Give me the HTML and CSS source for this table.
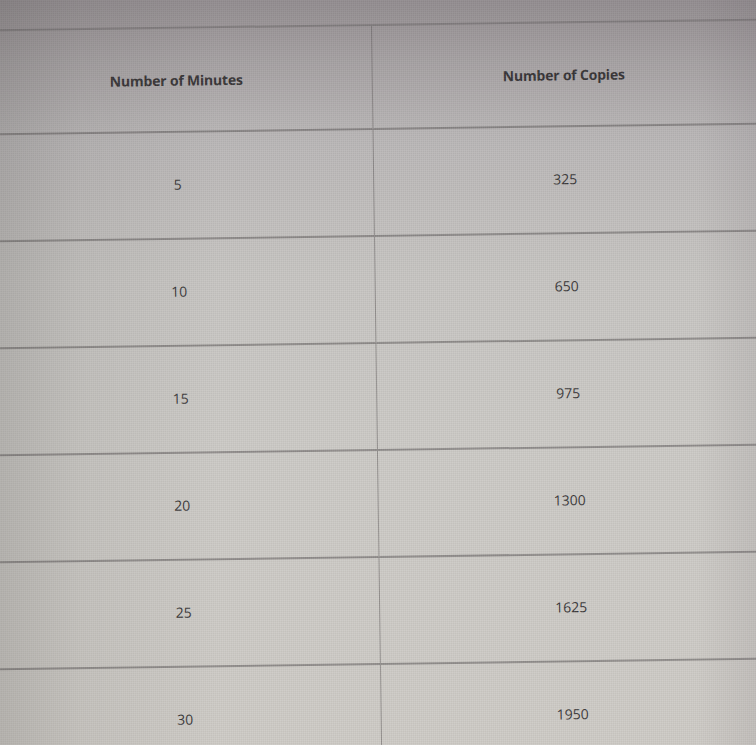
FILE: index.html
```html
<!DOCTYPE html>
<html lang="en">
<head>
<meta charset="utf-8">
<title>Table</title>
<link rel="stylesheet" href="styles.css">
</head>
<body>
<div class="screen">
  <div class="sheet">
    <div class="table">
      <div class="cell head">Number of Minutes</div>
      <div class="cell head">Number of Copies</div>
      <div class="cell">5</div>
      <div class="cell">325</div>
      <div class="cell">10</div>
      <div class="cell">650</div>
      <div class="cell">15</div>
      <div class="cell">975</div>
      <div class="cell">20</div>
      <div class="cell">1300</div>
      <div class="cell">25</div>
      <div class="cell">1625</div>
      <div class="cell">30</div>
      <div class="cell">1950</div>
    </div>
  </div>
  <div class="texture"></div>
  <div class="shade"></div>
</div>
</body>
</html>
```

FILE: styles.css
```css
html, body {
  margin: 0;
  padding: 0;
  width: 756px;
  height: 745px;
  overflow: hidden;
}

body {
  background: #c4c2bf;
  font-family: "Open Sans", "Liberation Sans", sans-serif;
}

.screen {
  position: relative;
  width: 756px;
  height: 745px;
  overflow: hidden;
  background:
    linear-gradient(180deg, #9b9698 0px, #aaa6a7 60px, #bab7b7 150px, #c6c4c1 280px, #cbc9c5 450px, #cdcac5 745px);
}

.sheet {
  padding-top: 24px;
  margin-left: -24px;
  width: 800px;
  transform: rotate(-0.8deg);
  transform-origin: 396px 24px;
}

.table {
  display: grid;
  grid-template-columns: 396px 404px;
  grid-template-rows: 104px;
  grid-auto-rows: 107px;
  border-top: 2px solid rgba(110, 106, 106, 0.55);
}

.cell {
  display: flex;
  align-items: center;
  justify-content: center;
  border-bottom: 2px solid rgba(100, 96, 96, 0.58);
  color: #383637;
  font-size: 14px;
  letter-spacing: 0px;
  padding-bottom: 2px;
  box-sizing: border-box;
}

.cell:nth-child(odd) {
  border-right: 1px solid rgba(100, 96, 96, 0.55);
  padding-left: 4px;
}

.cell:nth-child(even) {
  padding-right: 22px;
}

.head {
  font-weight: 700;
  color: #333132;
  font-size: 14px;
  letter-spacing: -0.2px;
  padding-bottom: 0;
}

.texture {
  position: absolute;
  inset: 0;
  pointer-events: none;
  background:
    repeating-linear-gradient(90deg, rgba(255,255,255,0.04) 0 1px, rgba(0,0,0,0.02) 1px 2px),
    repeating-linear-gradient(0deg, rgba(255,255,255,0.035) 0 1px, rgba(0,0,0,0.02) 1px 2px);
}

.shade {
  position: absolute;
  inset: 0;
  pointer-events: none;
  background:
    linear-gradient(90deg, rgba(70,68,66,0.18) 0px, rgba(70,68,66,0.07) 80px, rgba(0,0,0,0) 220px),
    linear-gradient(270deg, rgba(90,80,90,0.10) 0px, rgba(0,0,0,0) 60px),
    linear-gradient(180deg, rgba(90,80,88,0.14) 0px, rgba(0,0,0,0) 130px);
}
```
